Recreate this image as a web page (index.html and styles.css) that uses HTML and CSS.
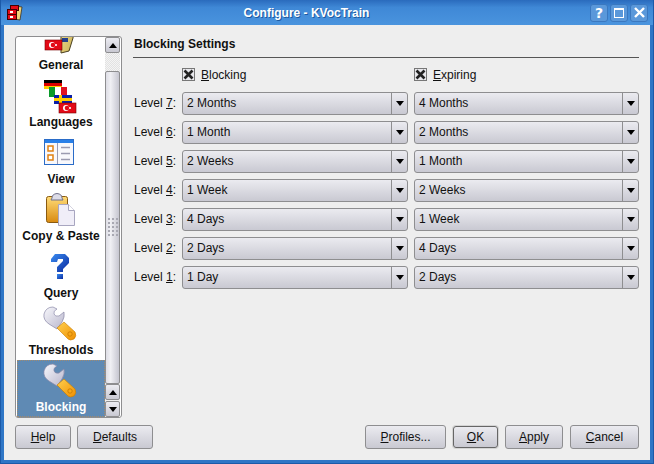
FILE: index.html
```html
<!DOCTYPE html>
<html lang="en">
<head>
  <meta charset="utf-8">
  <title>Configure - KVocTrain</title>
  <link rel="stylesheet" href="styles.css">
</head>
<body>
  <svg width="0" height="0" class="defs">
    <defs>
      <g id="turkish">
        <rect width="17" height="10" fill="#e30a17" stroke="#700" stroke-width=".6"/>
        <circle cx="7" cy="5" r="3" fill="#fff"/>
        <circle cx="8" cy="5" r="2.3" fill="#e30a17"/>
        <circle cx="11" cy="5" r="1.1" fill="#fff"/>
      </g>
      <linearGradient id="silver" x1="0" y1="0" x2="1" y2="1">
        <stop offset="0" stop-color="#f8f8fc"/>
        <stop offset="1" stop-color="#b8b6cc"/>
      </linearGradient>
      <linearGradient id="amber" x1="0" y1="0" x2="1" y2="1">
        <stop offset="0" stop-color="#ffd050"/>
        <stop offset="1" stop-color="#f09000"/>
      </linearGradient>
      <linearGradient id="clip" x1="0" y1="0" x2="0" y2="1">
        <stop offset="0" stop-color="#ffdc78"/>
        <stop offset="1" stop-color="#d88a10"/>
      </linearGradient>
      <linearGradient id="book" x1="0" y1="0" x2="1" y2="1">
        <stop offset="0" stop-color="#f4e49a"/>
        <stop offset="1" stop-color="#c8ae50"/>
      </linearGradient>
      <linearGradient id="query" x1="0" y1="0" x2="1" y2="1">
        <stop offset="0" stop-color="#3a8cf0"/>
        <stop offset="1" stop-color="#0a2aa0"/>
      </linearGradient>
      <g id="wrench">
        <path d="M9 -1 Q2 -1 0 6 Q-1 12 5 16 L13 21 L18 14 Q21 9 20 4 L15 8 Q11 9 10 6 Q9 3 13 1 Z" fill="url(#silver)" stroke="#8a88a8" stroke-width=".7"/>
        <path d="M13 20 L20 14 L31 24 Q33 28 30 31 Q26 33 24 31 Z" fill="url(#amber)" stroke="#c87c00" stroke-width=".6"/>
        <circle cx="26" cy="26" r="2.200" fill="#f8a818" stroke="#c87800" stroke-width=".8"/>
      </g>
    </defs>
  </svg>

  <div class="window">
    <header class="titlebar">
      <svg class="app-icon" width="16" height="16" viewBox="0 0 16 16">
        <path d="M8 1 L15 2 L13 15 L7 14 Z" fill="#eed27a" stroke="#3a3020" stroke-width=".8"/>
        <rect x="3.500" y=".500" width="8" height="5" fill="#e30a17" stroke="#400"/>
        <rect x=".500" y="4.500" width="9" height="5" fill="#e30a17" stroke="#400"/>
        <rect x=".500" y="9.500" width="9" height="5" fill="#e30a17" stroke="#400"/>
        <rect x="3" y="6" width="3" height="2" fill="#fff"/>
        <rect x="3" y="11" width="3" height="2" fill="#fff"/>
      </svg>
      <div class="title">Configure - KVocTrain</div>
      <div class="win-buttons">
        <div class="win-btn">?</div>
        <div class="win-btn"><span class="win-max"></span></div>
        <div class="win-btn">
          <svg width="11" height="11" viewBox="0 0 11 11"><path d="M1 1 L10 10 M10 1 L1 10" stroke="#fff" stroke-width="2.400"/></svg>
        </div>
      </div>
    </header>

    <div class="client">
      <div class="main">
        <nav class="sidebar">
          <div class="list">
            <div class="item">
              <svg class="icon" width="32" height="32" viewBox="0 0 32 32">
                <path d="M17 -8 L31 -6 L29 15 L25 28 L17 30 Z" fill="url(#book)" stroke="#4a4020"/>
                <rect x="18" y="15" width="6" height="4" fill="#24408c"/>
                <use href="#turkish" x="1" y="17"/>
              </svg>
              <span class="item-label">General</span>
            </div>
            <div class="item">
              <svg class="icon" width="32" height="32" viewBox="0 0 32 32">
                <rect y="0" width="18" height="3" fill="#000"/>
                <rect y="3" width="18" height="3" fill="#d00"/>
                <rect y="6" width="18" height="3" fill="#fc0"/>
                <rect x="5" y="7" width="6" height="10" fill="#0a9a2a"/>
                <rect x="11" y="7" width="6" height="10" fill="#fff"/>
                <rect x="17" y="7" width="6" height="10" fill="#e01020"/>
                <rect x="10" y="15" width="18" height="9" fill="#0a1ea8"/>
                <rect x="15" y="15" width="3" height="9" fill="#fc0"/>
                <rect x="10" y="18" width="18" height="3" fill="#fc0"/>
                <use href="#turkish" x="15" y="23"/>
              </svg>
              <span class="item-label">Languages</span>
            </div>
            <div class="item">
              <svg class="icon" width="32" height="32" viewBox="0 0 32 32">
                <rect x=".5" y="2.500" width="29" height="25" fill="#f8f8fc" stroke="#2a6cc8"/>
                <rect x="1" y="3" width="28" height="3" fill="#2a80e8"/>
                <rect x="4" y="9" width="5" height="5" fill="#fff" stroke="#e08010" stroke-width="1.500"/>
                <rect x="4" y="18" width="5" height="5" fill="#fff" stroke="#e08010" stroke-width="1.500"/>
                <path d="M13.500 6 V27" stroke="#9a9ab0"/>
                <path d="M17 10.500 H26 M17 16.500 H26 M17 22.500 H26" stroke="#9a9ab0" stroke-width="1.500"/>
              </svg>
              <span class="item-label">View</span>
            </div>
            <div class="item">
              <svg class="icon" width="32" height="32" viewBox="0 0 32 32">
                <rect x="2.500" y="2.500" width="21" height="26" rx="2" fill="url(#clip)" stroke="#8a5a10"/>
                <path d="M8 4 Q8 0 13 -.500 Q18 0 18 4 L19 6 H7 Z" fill="#dcdce8" stroke="#70708a"/>
                <path d="M14.500 10.500 H24.500 L30.500 16.500 V31.500 H14.500 Z" fill="#f0eef8" stroke="#a8a6c0"/>
                <path d="M24.500 10.500 V16.500 H30.500" fill="#fff" stroke="#a8a6c0"/>
              </svg>
              <span class="item-label">Copy &amp; Paste</span>
            </div>
            <div class="item">
              <svg class="icon" width="32" height="32" viewBox="0 0 32 32">
                <path d="M7 8 L11 3 H21 L25 7 V12 L19 18 V21 H13 V16 L19 10 V8 H14 L13 11 H7 Z" fill="url(#query)"/>
                <rect x="13" y="23" width="6" height="5" fill="url(#query)"/>
              </svg>
              <span class="item-label">Query</span>
            </div>
            <div class="item">
              <svg class="icon" width="32" height="32" viewBox="0 0 32 32"><use href="#wrench"/></svg>
              <span class="item-label">Thresholds</span>
            </div>
            <div class="item selected">
              <svg class="icon" width="32" height="32" viewBox="0 0 32 32"><use href="#wrench"/></svg>
              <span class="item-label">Blocking</span>
            </div>
          </div>
          <div class="scrollbar">
            <div class="sb-btn"><span class="arrow up"></span></div>
            <div class="sb-track"></div>
            <div class="sb-thumb"><span class="grip"></span></div>
            <div class="sb-btn"><span class="arrow up"></span></div>
            <div class="sb-btn last"><span class="arrow down"></span></div>
          </div>
        </nav>

        <section class="settings">
          <h1 class="heading">Blocking Settings</h1>
          <div class="form" id="form">
            <div></div>
            <label class="check"><span class="box"><svg width="11" height="11" viewBox="0 0 11 11"><path d="M1.500 1.500 L9.500 9.500 M9.500 1.500 L1.500 9.500" stroke="#222" stroke-width="2.600"/></svg></span><span><u>B</u>locking</span></label>
            <label class="check"><span class="box"><svg width="11" height="11" viewBox="0 0 11 11"><path d="M1.500 1.500 L9.500 9.500 M9.500 1.500 L1.500 9.500" stroke="#222" stroke-width="2.600"/></svg></span><span><u>E</u>xpiring</span></label>

            <span class="level">Level <u>7</u>:</span>
            <div class="combo"><span class="combo-text">2 Months</span><span class="combo-btn"><span class="arrow down"></span></span></div>
            <div class="combo"><span class="combo-text">4 Months</span><span class="combo-btn"><span class="arrow down"></span></span></div>

            <span class="level">Level <u>6</u>:</span>
            <div class="combo"><span class="combo-text">1 Month</span><span class="combo-btn"><span class="arrow down"></span></span></div>
            <div class="combo"><span class="combo-text">2 Months</span><span class="combo-btn"><span class="arrow down"></span></span></div>

            <span class="level">Level <u>5</u>:</span>
            <div class="combo"><span class="combo-text">2 Weeks</span><span class="combo-btn"><span class="arrow down"></span></span></div>
            <div class="combo"><span class="combo-text">1 Month</span><span class="combo-btn"><span class="arrow down"></span></span></div>

            <span class="level">Level <u>4</u>:</span>
            <div class="combo"><span class="combo-text">1 Week</span><span class="combo-btn"><span class="arrow down"></span></span></div>
            <div class="combo"><span class="combo-text">2 Weeks</span><span class="combo-btn"><span class="arrow down"></span></span></div>

            <span class="level">Level <u>3</u>:</span>
            <div class="combo"><span class="combo-text">4 Days</span><span class="combo-btn"><span class="arrow down"></span></span></div>
            <div class="combo"><span class="combo-text">1 Week</span><span class="combo-btn"><span class="arrow down"></span></span></div>

            <span class="level">Level <u>2</u>:</span>
            <div class="combo"><span class="combo-text">2 Days</span><span class="combo-btn"><span class="arrow down"></span></span></div>
            <div class="combo"><span class="combo-text">4 Days</span><span class="combo-btn"><span class="arrow down"></span></span></div>

            <span class="level">Level <u>1</u>:</span>
            <div class="combo"><span class="combo-text">1 Day</span><span class="combo-btn"><span class="arrow down"></span></span></div>
            <div class="combo"><span class="combo-text">2 Days</span><span class="combo-btn"><span class="arrow down"></span></span></div>
          </div>
        </section>
      </div>

      <footer class="footer">
        <button class="btn w-help"><u>H</u>elp</button>
        <button class="btn w-defaults"><u>D</u>efaults</button>
        <div class="spacer"></div>
        <button class="btn w-profiles"><u>P</u>rofiles...</button>
        <button class="btn btn-default w-ok"><u>O</u>K</button>
        <button class="btn w-apply"><u>A</u>pply</button>
        <button class="btn w-cancel"><u>C</u>ancel</button>
      </footer>
    </div>
  </div>
</body>
</html>
```

FILE: styles.css
```css
:root {
  --frame: #2f76c6;
  --face: #eeeeee;
  --line: #8e8e90;
  --text: #111111;
  --font: "Liberation Sans";
}

html, body {
  margin: 0;
  height: 100%;
}

body {
  background-color: var(--face);
  color: var(--text);
  font: 12px var(--font), sans-serif;
}

.defs {position: absolute}

.window {
  display: flex;
  flex-direction: column;
  box-sizing: border-box;
  height: 464px;
  border: solid #1c5aa8;
  border-width: 0 1px 1px;
}

/* title bar */
.titlebar {
  display: flex;
  align-items: center;
  flex: none;
  height: 25px;
  padding: 0 5px 0 6px;
  background: linear-gradient(#2a6bbd, #3f88d6 30%, #4a94de);
}

.app-icon {flex: none}

.title {
  flex: 1;
  text-align: center;
  color: #fff;
  font-weight: bold;
  text-shadow: 1px 1px 0 #1d5aa0;
}

.win-buttons {
  display: flex;
  gap: 2px;
}

.win-btn {
  display: flex;
  align-items: center;
  justify-content: center;
  box-sizing: border-box;
  width: 18px;
  height: 18px;
  background-color: #5a98da;
  border: 1px solid #3a78c0;
  border-radius: 3px;
  color: #fff;
  font: bold 14px "DejaVu Sans", sans-serif;
}

.win-max {
  box-sizing: border-box;
  width: 10px;
  height: 10px;
  border: 1px solid #fff;
  border-top-width: 2px;
}

/* client area */
.client {
  display: flex;
  flex-direction: column;
  flex: 1;
  min-height: 0;
  padding: 11px;
  background-color: var(--face);
  border: solid var(--frame);
  border-width: 0 3px 3px;
}

.main {
  display: flex;
  flex: 1;
  min-height: 0;
}

/* sidebar list */
.sidebar {
  display: flex;
  flex: none;
  box-sizing: border-box;
  width: 107px;
  height: 382px;
  padding: 0 1px;
  background-color: #fff;
  border: 1px solid var(--line);
  border-radius: 3px;
}

.list {
  display: flex;
  flex-direction: column;
  justify-content: flex-end;
  flex: none;
  width: 88px;
  overflow: hidden;
}

.item {
  display: flex;
  flex-direction: column;
  align-items: center;
  flex: none;
  box-sizing: border-box;
  height: 57px;
  padding-top: 5px;
}

.icon {
  flex: none;
  margin-right: 2px;
  overflow: visible;
}

.item-label {
  margin-top: 3px;
  font-weight: bold;
  line-height: 14px;
  white-space: nowrap;
}

.selected {
  background-color: #5f8ab4;
  color: #fff;
  outline: 1px dotted #a08a70;
  outline-offset: -1px;
}

/* scrollbar */
.scrollbar {
  display: flex;
  flex-direction: column;
  flex: none;
  width: 15px;
  background-color: var(--face);
}

.sb-btn {
  display: flex;
  align-items: center;
  justify-content: center;
  flex: none;
  box-sizing: border-box;
  height: 16px;
  background: linear-gradient(#ececf2, #c9c9d2);
  border: 1px solid var(--line);
  border-radius: 2px;
}

.sb-btn.last {margin-top: 1px}

.sb-track {
  flex: none;
  height: 18px;
  background: repeating-conic-gradient(#e2e2e2 0 25%, #f4f4f4 0 50%) 0 0 / 2px 2px;
}

.sb-thumb {
  display: flex;
  align-items: center;
  justify-content: center;
  flex: 1;
  box-sizing: border-box;
  background: linear-gradient(90deg, #dedee6, #f0f0f4 35%, #c6c6d0);
  border: 1px solid var(--line);
  border-radius: 2px;
}

.grip {
  width: 11px;
  height: 19px;
  margin-bottom: 3px;
  background: radial-gradient(circle, #a8a8b2 1px, transparent 1px) 0 0 / 4px 4px;
}

.arrow {
  width: 0;
  height: 0;
  border-left: 4px solid transparent;
  border-right: 4px solid transparent;
}

.arrow.up {border-bottom: 5px solid #000}
.arrow.down {border-top: 5px solid #000}

/* settings page */
.settings {
  display: flex;
  flex-direction: column;
  flex: 1;
  min-width: 0;
  margin-left: 11px;
}

.heading {
  margin: 0;
  padding: 1px 1px 6px;
  font-size: 12px;
  font-weight: bold;
  line-height: 14px;
  border-bottom: 1px solid #555;
}

.form {
  display: grid;
  grid-template-columns: 42px 226px 225px;
  grid-auto-rows: 23px;
  gap: 6px;
  margin: 5px 0 0 1px;
}

.check {
  display: flex;
  align-items: center;
  gap: 6px;
  height: 23px;
}

.box {
  display: flex;
  align-items: center;
  justify-content: center;
  box-sizing: border-box;
  width: 13px;
  height: 13px;
  background-color: #e8e8ec;
  border: 1px solid #777;
}

.level {
  line-height: 23px;
  white-space: nowrap;
}

.combo {
  display: flex;
  box-sizing: border-box;
  height: 23px;
  background: linear-gradient(#ebebf0, #c9c9d2);
  border: 1px solid var(--line);
  border-radius: 3px;
}

.combo-text {
  flex: 1;
  padding-left: 4px;
  line-height: 21px;
}

.combo-btn {
  display: flex;
  align-items: center;
  justify-content: center;
  flex: none;
  box-sizing: border-box;
  width: 16px;
  border-left: 1px solid var(--line);
}

/* bottom buttons */
.footer {
  display: flex;
  flex: none;
  gap: 6px;
  height: 24px;
}

.spacer {flex: 1}

.btn {
  box-sizing: border-box;
  height: 24px;
  padding: 0;
  background: linear-gradient(#ebebf0, #c9c9d2);
  border: 1px solid var(--line);
  border-radius: 3px;
  color: var(--text);
  font: 12px var(--font), sans-serif;
}

.btn-default {
  height: 22px;
  margin: 1px;
  border-color: #666;
  box-shadow: 0 0 0 1px #d4d4d4;
}

.w-help {width: 56px}
.w-defaults {width: 76px}
.w-profiles {width: 81px}
.w-ok {width: 45px}
.w-apply {width: 58px}
.w-cancel {width: 69px; margin-left: 1px}
```
